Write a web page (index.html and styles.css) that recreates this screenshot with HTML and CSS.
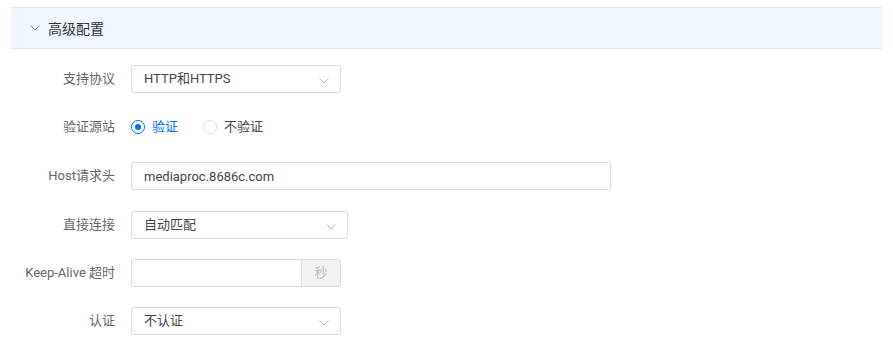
FILE: index.html
```html
<!DOCTYPE html>
<html lang="zh-CN">

<head>
    <meta charset="UTF-8">
    <meta name="viewport" content="width=device-width, initial-scale=1.0">
    <title>高级配置</title>
    <link rel="stylesheet" href="styles.css">
</head>

<body>
    <div class="panel">
        <div class="panel-head">
            <svg class="head-arrow" width="10" height="6" viewBox="0 0 10 6">
                <path d="M0.5 0.5 L5 5 L9.5 0.5" fill="none" stroke="#888" stroke-width="1"/>
            </svg>
            <span class="head-title">高级配置</span>
        </div>

        <form class="form">
            <div class="form-row">
                <label class="form-label">支持协议</label>
                <div class="select w-210">
                    <span>HTTP和HTTPS</span>
                    <svg class="select-arrow" width="10" height="6" viewBox="0 0 10 6">
                        <path d="M0.5 0.5 L5 5 L9.5 0.5" fill="none" stroke="#bbb" stroke-width="1"/>
                    </svg>
                </div>
            </div>

            <div class="form-row tall">
                <label class="form-label">验证源站</label>
                <label class="radio checked"><span class="radio-dot"></span>验证</label>
                <label class="radio"><span class="radio-dot"></span>不验证</label>
            </div>

            <div class="form-row tall">
                <label class="form-label">Host请求头</label>
                <input class="input w-480" type="text" value="mediaproc.8686c.com">
            </div>

            <div class="form-row">
                <label class="form-label">直接连接</label>
                <div class="select w-217">
                    <span>自动匹配</span>
                    <svg class="select-arrow" width="10" height="6" viewBox="0 0 10 6">
                        <path d="M0.5 0.5 L5 5 L9.5 0.5" fill="none" stroke="#bbb" stroke-width="1"/>
                    </svg>
                </div>
            </div>

            <div class="form-row">
                <label class="form-label">Keep-Alive 超时</label>
                <div class="input-group w-210">
                    <input class="input-inner" type="text">
                    <span class="addon">秒</span>
                </div>
            </div>

            <div class="form-row">
                <label class="form-label">认证</label>
                <div class="select w-210">
                    <span>不认证</span>
                    <svg class="select-arrow" width="10" height="6" viewBox="0 0 10 6">
                        <path d="M0.5 0.5 L5 5 L9.5 0.5" fill="none" stroke="#bbb" stroke-width="1"/>
                    </svg>
                </div>
            </div>
        </form>
    </div>
</body>

</html>
```

FILE: styles.css
```css
body {
    margin: 0;
    font-family: Roboto, "Noto Sans CJK SC", sans-serif;
    font-size: 13px;
    color: #333;
    background: #fff;
}

.panel {
    margin: 7px 11px 0;
}

.panel-head {
    display: flex;
    align-items: center;
    height: 40px;
    border-top: 1px solid #e5e5e5;
    border-bottom: 1px solid #e5e5e5;
    background-color: #eff6ff;
}

.head-arrow {
    margin-left: 19px;
    margin-right: 8px;
}

.head-title {
    font-size: 14px;
    color: #333;
}

.form {
    padding-top: 16px;
}

.form-row {
    display: flex;
    align-items: flex-start;
    height: 28px;
    line-height: 28px;
    margin-bottom: 20px;
}

.form-row.tall {
    height: 29px;
}

.form-label {
    width: 104px;
    margin-right: 16px;
    text-align: right;
    color: #666;
    white-space: nowrap;
}

.w-210 {
    width: 210px;
}

.w-217 {
    width: 217px;
}

.w-480 {
    width: 480px;
}

.select {
    display: flex;
    align-items: center;
    justify-content: space-between;
    height: 28px;
    box-sizing: border-box;
    padding: 0 11px 0 12px;
    border: 1px solid #ddd;
    border-radius: 2px;
    color: #444;
}

.select-arrow {
    margin-top: 4px;
}

.input {
    height: 28px;
    box-sizing: border-box;
    padding: 0 12px;
    border: 1px solid #ddd;
    border-radius: 2px;
    font-family: inherit;
    font-size: 13px;
    color: #444;
}

.input-group {
    display: flex;
    height: 28px;
    box-sizing: border-box;
    border: 1px solid #ddd;
    border-radius: 2px;
}

.input-inner {
    flex: 1;
    min-width: 0;
    border: none;
    padding: 0 12px;
    font-family: inherit;
    font-size: 13px;
}

.addon {
    display: flex;
    align-items: center;
    justify-content: center;
    width: 38px;
    border-left: 1px solid #ddd;
    background-color: #f2f2f2;
    color: #bbb;
}

.radio {
    display: flex;
    align-items: center;
    height: 28px;
    margin-right: 25px;
    color: #444;
}

.radio:first-of-type {
    margin-left: 1px;
}

.radio-dot {
    width: 14px;
    height: 14px;
    box-sizing: border-box;
    border: 1px solid #ddd;
    border-radius: 50%;
    margin-right: 7px;
    position: relative;
}

.radio.checked {
    color: #006eff;
}

.radio.checked .radio-dot {
    border-color: #006eff;
}

.radio.checked .radio-dot::after {
    content: "";
    position: absolute;
    left: 3px;
    top: 3px;
    width: 6px;
    height: 6px;
    border-radius: 50%;
    background-color: #006eff;
}
```
